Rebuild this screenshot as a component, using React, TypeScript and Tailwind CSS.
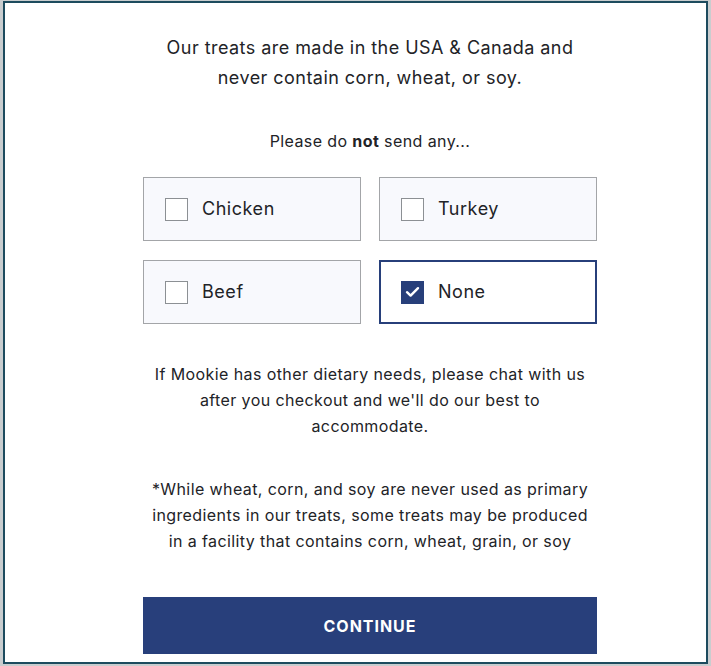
import React from "react";

const font = { fontFamily: "Inter, 'Noto Sans', 'Liberation Sans', sans-serif" };

function Option({ label, checked }: { label: string; checked?: boolean }) {
  return (
    <div
      className={
        checked
          ? "flex h-[64px] items-center border-2 border-[#273f7a] bg-white pl-[20px]"
          : "flex h-[64px] items-center border border-[#a3a5a8] bg-[#f8f9fd] pl-[21px]"
      }
    >
      {checked ? (
        <div className="flex h-[23px] w-[23px] items-center justify-center bg-[#273f7a]">
          <svg width="15" height="12" viewBox="0 0 15 12" fill="none">
            <path d="M2 6.2 L5.6 9.6 L13 2.2" stroke="white" strokeWidth="2.4" strokeLinecap="round" strokeLinejoin="round" />
          </svg>
        </div>
      ) : (
        <div className="h-[23px] w-[23px] border border-[#8c9094] bg-white" />
      )}
      <span className="ml-[14px] text-[18px] leading-[24px] tracking-[0.03em] text-[#222327]">{label}</span>
    </div>
  );
}

export default function App() {
  return (
    <div className="h-[666px] w-[711px] bg-[#c9cdcf] pb-[2px] pl-[3px] pr-[3px] pt-[1px]" style={font}>
      <div className="h-full w-full border-2 border-[#1d4b5e] bg-white pt-[30px]">
        <div className="ml-[138px] w-[454px] text-[#222327]">
          <p className="text-center text-[18px] leading-[30px] tracking-[0.025em]">
            Our treats are made in the USA &amp; Canada and
            <br />
            never contain corn, wheat, or soy.
          </p>
          <p className="mt-[36px] text-center text-[16px] leading-[24px] tracking-[0.025em]">
            Please do <span className="font-bold">not</span> send any...
          </p>
          <div className="mt-[24px] grid grid-cols-2 gap-x-[18px] gap-y-[19px]">
            <Option label="Chicken" />
            <Option label="Turkey" />
            <Option label="Beef" />
            <Option label="None" checked />
          </div>
          <p className="mt-[37px] px-[8px] text-center text-[16px] leading-[26px] tracking-[0.025em]">
            If Mookie has other dietary needs, please chat with us after you checkout and we'll do our best to accommodate.
          </p>
          <p className="mt-[37px] text-center text-[16px] leading-[26px] tracking-[0.025em]">
            *While wheat, corn, and soy are never used as primary ingredients in our treats, some treats may be produced in a facility that contains corn, wheat, grain, or soy
          </p>
          <button className="mt-[43px] flex h-[57px] w-full items-center justify-center bg-[#283f7b] text-[16px] font-bold tracking-[0.06em] text-white">
            CONTINUE
          </button>
        </div>
      </div>
    </div>
  );
}
